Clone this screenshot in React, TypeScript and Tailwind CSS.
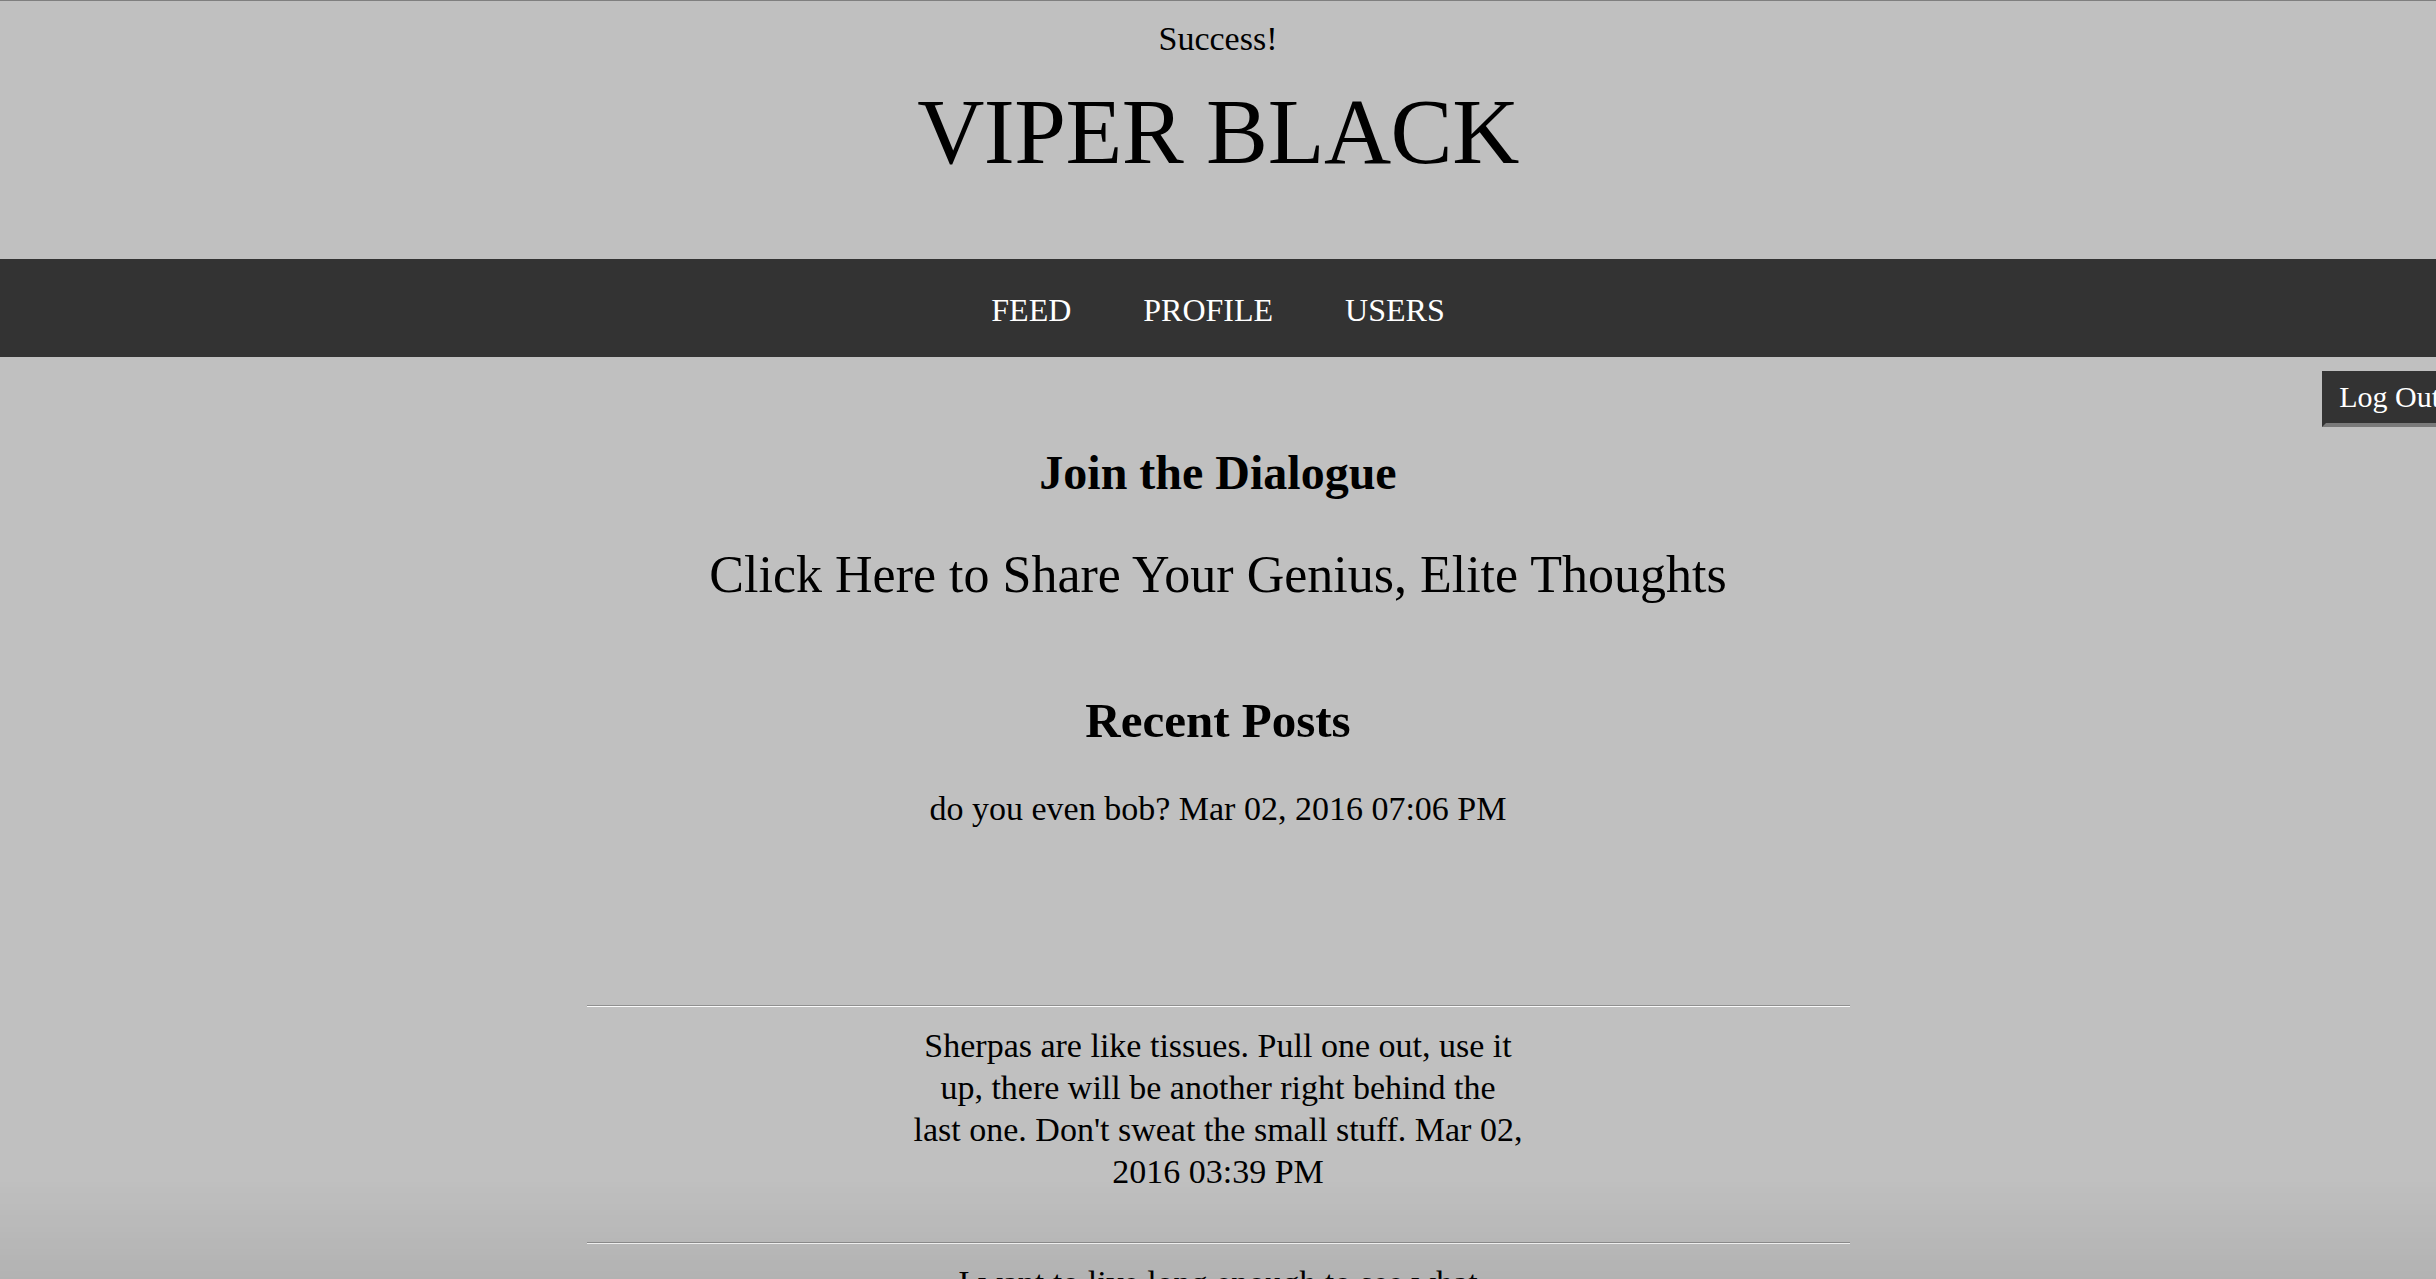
import React from "react";

export default function App() {
  return (
    <div className="relative min-h-screen w-full overflow-x-hidden bg-[#c0c0c0] border-t border-t-[#7f7f7f] font-['Liberation_Serif','Times_New_Roman',serif] text-black">
      <header className="flex flex-col items-center">
        <div className="mt-[18px] text-[34px] leading-[40px]">Success!</div>
        <h1 className="mt-[23px] text-[93px] leading-[100px] font-normal tracking-[-0.5px]">VIPER BLACK</h1>
      </header>

      <nav className="mt-[77px] flex h-[98px] items-center justify-center gap-[72px] bg-[#333333] pt-[4px] text-[32px] leading-[37px] text-white">
        <a className="cursor-pointer">FEED</a>
        <a className="cursor-pointer">PROFILE</a>
        <a className="cursor-pointer">USERS</a>
      </nav>

      <main className="relative flex flex-col items-center">
        <button className="absolute right-[-17px] top-[14px] h-[56px] border-b-4 border-l-4 border-b-[#7a7a7a] border-l-transparent bg-[#333333] pl-[13px] pr-[13px] text-[30px] leading-[52px] text-white">
          Log Out
        </button>

        <h2 className="mt-[88px] text-[48px] font-bold leading-[56px]">Join the Dialogue</h2>
        <a className="mt-[44px] cursor-pointer text-[52px] leading-[60px]">
          Click Here to Share Your Genius, Elite Thoughts
        </a>

        <h2 className="mt-[88px] text-[49px] font-bold leading-[56px]">Recent Posts</h2>

        <section className="mt-[21px] flex w-[1263px] flex-col">
          <div className="h-[235px] pt-[18px] text-center text-[34px] leading-[42px]">
            do you even bob? Mar 02, 2016 07:06 PM
          </div>
          <div className="h-0 border-t border-b border-t-[#909090] border-b-[#fafafa]" />
          <div className="mx-auto h-[235px] w-[720px] pt-[18px] text-center text-[34px] leading-[42px]">
            Sherpas are like tissues. Pull one out, use it
            <br />
            up, there will be another right behind the
            <br />
            last one. Don't sweat the small stuff. Mar 02,
            <br />
            2016 03:39 PM
          </div>
          <div className="h-0 border-t border-b border-t-[#909090] border-b-[#fafafa]" />
          <div className="mx-auto h-[235px] w-[720px] pt-[18px] text-center text-[34px] leading-[42px]">
            I want to live long enough to see what
          </div>
        </section>
      </main>

      <div className="pointer-events-none fixed bottom-0 left-0 right-0 h-[100px] bg-gradient-to-b from-transparent to-black/[0.07]" />
    </div>
  );
}
